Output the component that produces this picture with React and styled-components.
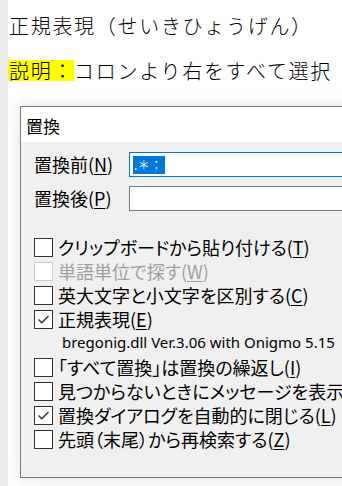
import React from "react";
import styled, { createGlobalStyle } from "styled-components";

const GlobalStyle = createGlobalStyle`
  html, body {
    margin: 0;
    padding: 0;
    background: #fff;
    overflow: hidden;
  }
  body {
    font-family: "Noto Sans CJK JP", "Noto Sans", sans-serif;
    color: #000;
  }
`;

const options = [
  { label: "クリップボードから貼り付ける", key: "T" },
  { label: "単語単位で探す", key: "W", disabled: true },
  { label: "英大文字と小文字を区別する", key: "C" },
  { label: "正規表現", key: "E", checked: true, note: "bregonig.dll Ver.3.06 with Onigmo 5.15" },
  { label: "「すべて置換」は置換の繰返し", key: "I" },
  { label: "見つからないときにメッセージを表示", key: "M" },
  { label: "置換ダイアログを自動的に閉じる", key: "L", checked: true },
  { label: "先頭（末尾）から再検索する", key: "Z" },
];

const App = () => {
  return (
    <Page>
      <GlobalStyle />
      <SideStrip />
      <Content>
        <Heading>
          <Line>正規表現（せいきひょうげん）</Line>
          <Line>
            <Marker>説明：</Marker>コロンより右をすべて選択
          </Line>
        </Heading>
        <Dialog>
          <TitleBar>置換</TitleBar>
          <Body>
            <FieldRow>
              <FieldLabel>
                置換前(<AccessKey>N</AccessKey>)
              </FieldLabel>
              <TextBox focused>
                <Selection>.＊：</Selection>
              </TextBox>
            </FieldRow>
            <FieldRow>
              <FieldLabel>
                置換後(<AccessKey>P</AccessKey>)
              </FieldLabel>
              <TextBox />
            </FieldRow>
            <OptionList>
              {options.map(opt => (
                <React.Fragment key={opt.key}>
                  <OptionRow disabled={opt.disabled}>
                    <Box disabled={opt.disabled}>
                      {opt.checked && (
                        <svg width="17" height="17" viewBox="0 0 17 17">
                          <path
                            d="M3.5 8.5 L6.8 11.8 L13.5 5"
                            fill="none"
                            stroke="#333"
                            strokeWidth="1.4"
                          />
                        </svg>
                      )}
                    </Box>
                    <OptionText>
                      {opt.label}(<AccessKey>{opt.key}</AccessKey>)
                    </OptionText>
                  </OptionRow>
                  {opt.note && <VersionNote>{opt.note}</VersionNote>}
                </React.Fragment>
              ))}
            </OptionList>
          </Body>
        </Dialog>
      </Content>
    </Page>
  );
};

export default App;

const Page = styled.div`
  display: flex;
  width: 342px;
  height: 486px;
  overflow: hidden;
`;

const SideStrip = styled.div`
  flex: 0 0 8px;
  background: #ededed;
`;

const Content = styled.div`
  flex: 1;
  min-width: 0;
  display: flex;
  flex-direction: column;
`;

const Heading = styled.div`
  padding: 15px 0 0 1px;
  display: flex;
  flex-direction: column;
  gap: 23px;
  font-family: "Noto Sans CJK JP", sans-serif;
  font-weight: 300;
  font-size: 20px;
  letter-spacing: 1.7px;
  white-space: nowrap;
`;

const Line = styled.div`
  height: 22px;
  line-height: 22px;
`;

const Marker = styled.span`
  display: inline-block;
  height: 21px;
  line-height: 21px;
  margin-left: -1px;
  padding-left: 1px;
  background: #ffff00;
`;

const Dialog = styled.div`
  margin: 24px 0 0 12px;
  width: 400px;
  height: 370px;
  flex-shrink: 0;
  border: 1px solid #7a7a7a;
  background: #f0f0f0;
  box-shadow: 0 0 14px rgba(0, 0, 0, 0.13);
  display: flex;
  flex-direction: column;
`;

const TitleBar = styled.div`
  height: 35px;
  background: #fff;
  padding-left: 5px;
  font-size: 17px;
  line-height: 38px;
`;

const Body = styled.div`
  padding: 10px 0 0 13px;
  display: flex;
  flex-direction: column;
  gap: 9px;
  font-size: 18px;
  font-feature-settings: "palt";
`;

const FieldRow = styled.div`
  display: flex;
  align-items: center;
  height: 25px;
`;

const FieldLabel = styled.div`
  width: 95px;
  line-height: 25px;
  white-space: nowrap;
`;

const AccessKey = styled.u`
  text-decoration: underline;
  text-underline-offset: 2px;
`;

const TextBox = styled.div`
  flex: 1;
  height: 23px;
  background: #fff;
  border: 1px solid ${p => (p.focused ? "#0078d7" : "#7a7a7a")};
  display: flex;
  align-items: center;
  padding-left: 3px;
`;

const Selection = styled.span`
  height: 18px;
  line-height: 18px;
  padding: 0 2px 0 1px;
  background: #0078d7;
  color: #fff;
  font-size: 12px;
  font-feature-settings: normal;
  letter-spacing: 0.5px;
`;

const OptionList = styled.div`
  margin-top: 15px;
  display: flex;
  flex-direction: column;
`;

const OptionRow = styled.div`
  display: flex;
  align-items: center;
  height: 24px;
  color: ${p => (p.disabled ? "#a0a0a0" : "#000")};
  white-space: nowrap;
`;

const Box = styled.span`
  flex: 0 0 auto;
  width: 17px;
  height: 17px;
  border: 1px solid ${p => (p.disabled ? "#cccccc" : "#333")};
  background: #fff;
  margin-right: 5px;
  display: flex;
`;

const OptionText = styled.span`
  line-height: 24px;
`;

const VersionNote = styled.div`
  height: 24px;
  line-height: 22px;
  padding-left: 28px;
  font-family: "Noto Sans", sans-serif;
  font-size: 15px;
  white-space: nowrap;
`;
